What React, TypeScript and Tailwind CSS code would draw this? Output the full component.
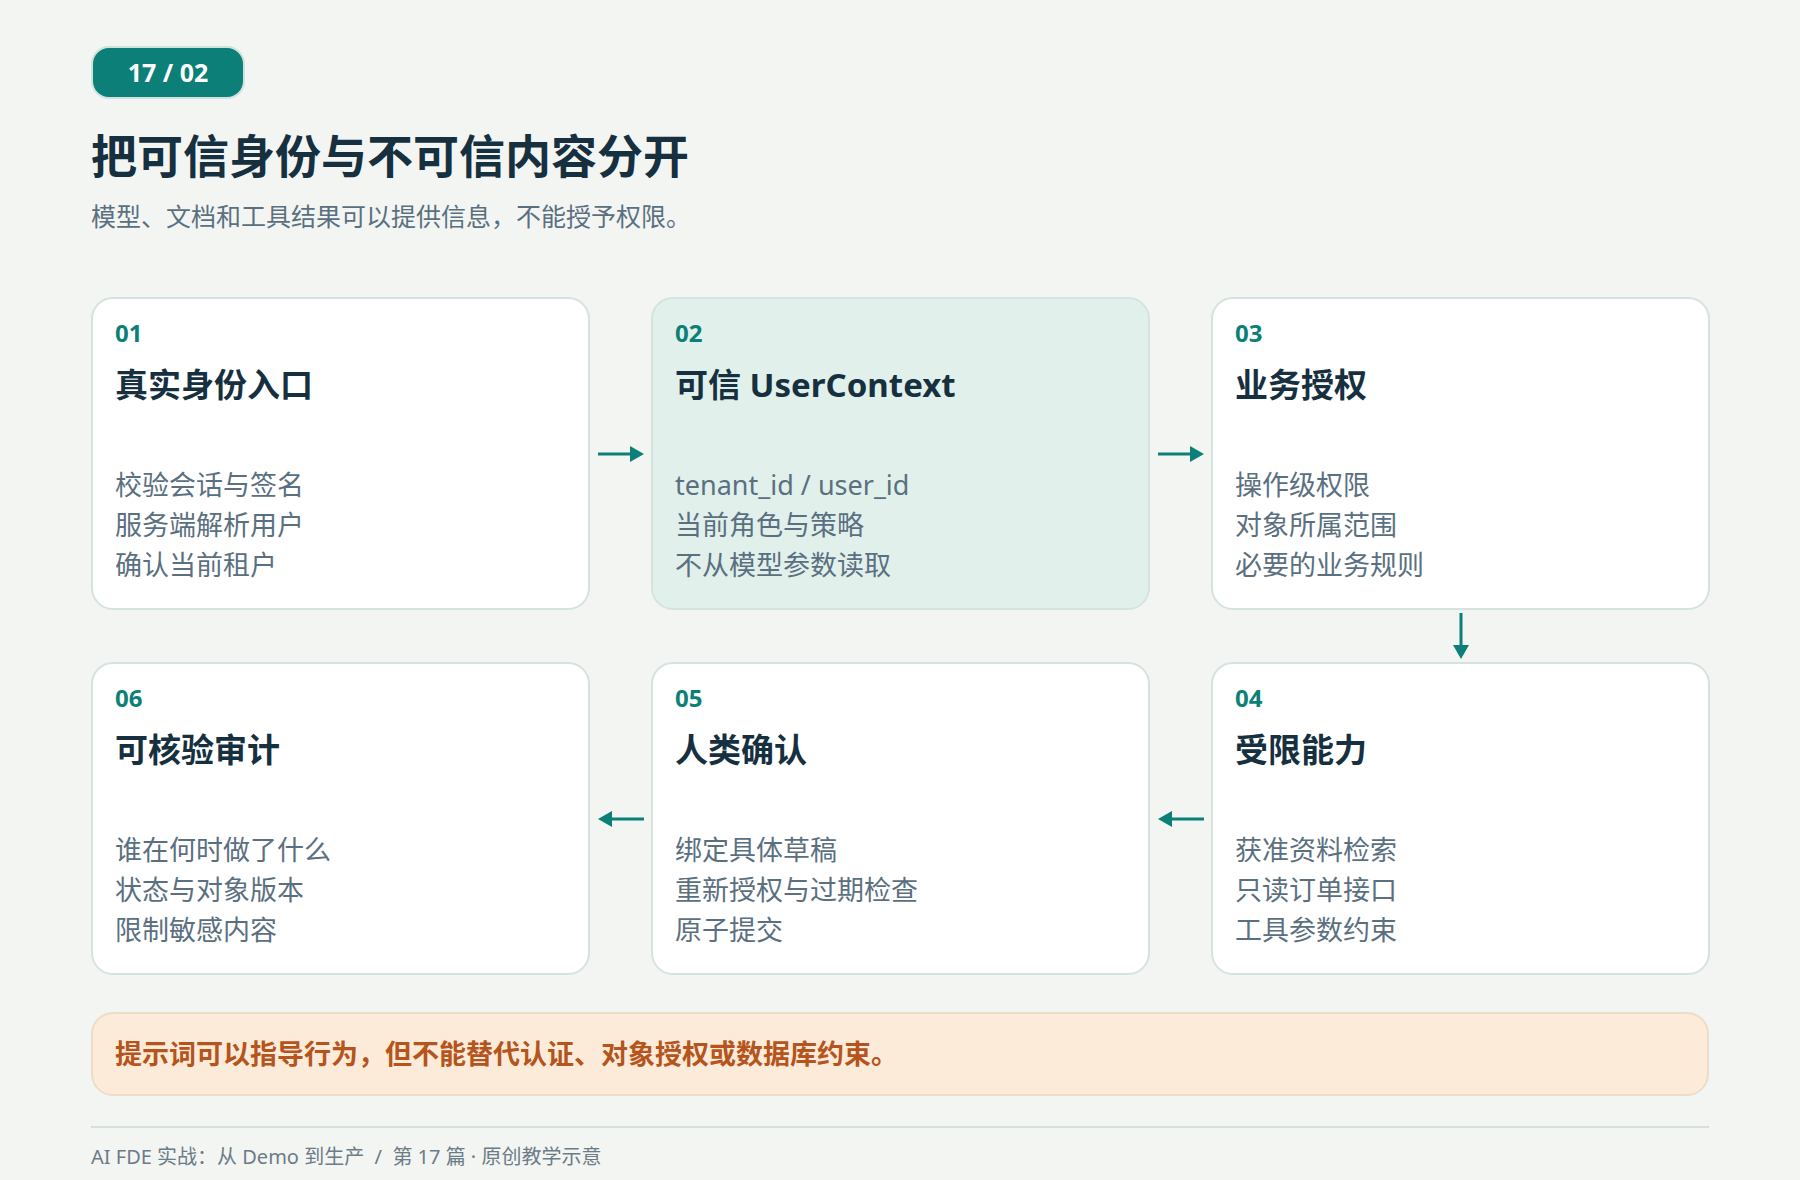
const F = { fontFamily: '"Noto Sans", "Noto Sans CJK SC", sans-serif' };

type Card = { n: string; title: string; items: string[]; hl?: boolean };

const cards: Record<string, Card> = {
  c1: { n: '01', title: '真实身份入口', items: ['校验会话与签名', '服务端解析用户', '确认当前租户'] },
  c2: { n: '02', title: '可信 UserContext', items: ['tenant_id / user_id', '当前角色与策略', '不从模型参数读取'], hl: true },
  c3: { n: '03', title: '业务授权', items: ['操作级权限', '对象所属范围', '必要的业务规则'] },
  c4: { n: '04', title: '受限能力', items: ['获准资料检索', '只读订单接口', '工具参数约束'] },
  c5: { n: '05', title: '人类确认', items: ['绑定具体草稿', '重新授权与过期检查', '原子提交'] },
  c6: { n: '06', title: '可核验审计', items: ['谁在何时做了什么', '状态与对象版本', '限制敏感内容'] },
};

const StepCard = ({ c }: { c: Card }) => (
  <div
    className={`h-[313px] rounded-[22px] border-2 border-[#d5e3e0] px-[22px] pt-[18px] ${c.hl ? 'bg-[#e1f0eb]' : 'bg-white'}`}
  >
    <div className="text-[24px] font-bold text-[#0b7f78] leading-[32px]">{c.n}</div>
    <div className="mt-[14px] text-[33px] font-bold text-[#16303f] leading-[44px]">{c.title}</div>
    <div className="mt-[58px] flex flex-col">
      {c.items.map((t) => (
        <div key={t} className="text-[27px] text-[#5a7080] leading-[40px]">{t}</div>
      ))}
    </div>
  </div>
);

const Arrow = ({ dir }: { dir: 'r' | 'l' | 'd' }) => {
  const rot = dir === 'r' ? '' : dir === 'l' ? 'rotate-180' : 'rotate-90';
  return (
    <svg width="46" height="18" viewBox="0 0 46 18" className={rot}>
      <rect x="0" y="7.5" width="34" height="3" fill="#0b7f78" />
      <path d="M32 1 L46 9 L32 17 Z" fill="#0b7f78" />
    </svg>
  );
};

export default function App() {
  return (
    <div className="w-[1800px] h-[1180px] bg-[#f3f5f3] px-[91px] pt-[46px]" style={F}>
      <div className="inline-flex h-[53px] w-[154px] items-center justify-center rounded-[18px] border-2 border-[#cfe2de] bg-[#0b7f78] text-[25px] font-bold text-white">
        17 / 02
      </div>
      <h1 className="mt-[26px] text-[46px] font-bold leading-[60px] text-[#16303f]">把可信身份与不可信内容分开</h1>
      <p className="mt-[14px] text-[25px] leading-[34px] text-[#5a7080]">模型、文档和工具结果可以提供信息，不能授予权限。</p>

      <div className="mt-[64px] grid grid-cols-[499px_61px_499px_61px_499px] grid-rows-[313px_52px_313px]">
        <StepCard c={cards.c1} />
        <div className="flex items-center justify-center"><Arrow dir="r" /></div>
        <StepCard c={cards.c2} />
        <div className="flex items-center justify-center"><Arrow dir="r" /></div>
        <StepCard c={cards.c3} />

        <div />
        <div />
        <div />
        <div />
        <div className="flex items-center justify-center"><Arrow dir="d" /></div>

        <StepCard c={cards.c6} />
        <div className="flex items-center justify-center"><Arrow dir="l" /></div>
        <StepCard c={cards.c5} />
        <div className="flex items-center justify-center"><Arrow dir="l" /></div>
        <StepCard c={cards.c4} />
      </div>

      <div className="mt-[37px] flex h-[84px] items-center rounded-[22px] border-2 border-[#ecdcc8] bg-[#fcebd9] px-[22px] text-[27px] font-bold text-[#b5541c]">
        提示词可以指导行为，但不能替代认证、对象授权或数据库约束。
      </div>

      <div className="mt-[30px] border-t-2 border-[#d5dfdc] pt-[14px] text-[20px] text-[#6b7c87]">
        AI FDE 实战：从 Demo 到生产 &nbsp;/&nbsp; 第 17 篇 · 原创教学示意
      </div>
    </div>
  );
}
